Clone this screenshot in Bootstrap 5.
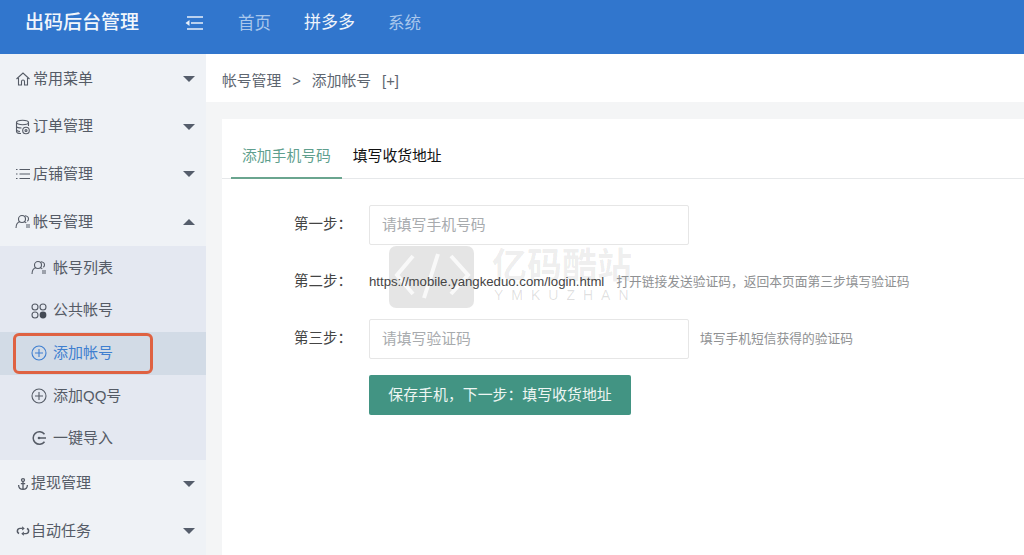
<!DOCTYPE html>
<html lang="zh">
<head>
<meta charset="utf-8">
<title>出码后台管理</title>
<link href="https://cdn.jsdelivr.net/npm/bootstrap@5.3.0/dist/css/bootstrap.min.css" rel="stylesheet">
<style>
html,body{height:100%;overflow:hidden}
body{font-family:"Liberation Sans","Noto Sans CJK SC",sans-serif;background:#f4f5f6;color:#444;font-size:14px;width:1024px;height:555px}
.topbar{height:54px;background:#3176cd;padding:0 0 8px 25px;flex-wrap:nowrap;justify-content:flex-start}
.brandname{font-size:19px;color:#f2f6fc;font-weight:500;width:159px;margin:1px 0 0;padding:0}
.menutoggle{width:20px;height:16px;margin-right:34px;display:block}
.toplink{font-size:16.500px;padding:0;margin-right:33px;color:#a9c7ec}
.toplink.now{color:#eef4fb;font-size:17px}
.layout{height:501px}
.sidenav{width:206px;background:#eff2f6;flex:none;overflow:hidden;padding-top:1px}
.sideitem{height:47.7px;padding:0 11px 0 15px;color:#555b66;font-size:15px;text-decoration:none}
.sideitem svg{width:16px;height:16px;margin-right:2px;flex:none}
.sideitem svg.slimicon{width:14px;height:14px;margin-left:1px;margin-right:1px}
.caretdown,.caretup{width:0;height:0;border-left:6.500px solid transparent;border-right:6.500px solid transparent}
.caretdown{border-top:6.500px solid #555d6b}
.caretup{border-bottom:6.500px solid #555d6b}
.subnav{background:#e4e8f1;margin:0;padding:1px 0 0;list-style:none}
.subitem{height:42.6px;padding-left:31px;color:#555b66;font-size:15px;position:relative;text-decoration:none}
.subitem svg{width:16px;height:16px;margin-right:6px;flex:none}
.subitem.now{background:#d2dbe6;color:#3f7fd0}
.callout{position:absolute;left:13px;top:1px;width:140px;height:41px;border:3px solid #df6242;border-radius:6px}
.mainpane{min-width:0;position:relative}
.crumbbar{height:48px;background:#fff;padding:7px 0 0 16px;font-size:14.800px;color:#5e6670;gap:11px}
.formcard{background:#fff;margin:17px 0 0 16px;height:440px;padding-top:18px}
.tabrow{height:42px;border-bottom:1px solid #e6e8ea;padding-left:9px;margin:0;list-style:none}
.tabbtn{display:block;height:42px;line-height:38px;padding:0 11px;font-size:14.800px;color:#111;text-decoration:none}
.tabbtn.now{color:#5f9f8e;border-bottom:2px solid #6aa58f}
.stepform{padding:26px 0 0 72px;position:relative;z-index:1}
.steprow{margin-bottom:17px;min-height:40px}
.steplabel{width:75px;font-size:14.500px;color:#444;flex:none}
.stepfield{width:320px;height:40px;border:1px solid #e6e6e6;border-radius:2px;font-size:14.800px;padding:0 12px;color:#444}
.stepfield::placeholder{color:#a8abae}
.urltext{font-size:13.200px;color:#444;margin-right:12px}
.tiptext{font-size:12.750px;color:#8f9193}
.tipgap{margin-left:11px}
.savebtn{background:#429483;color:#eef6f3;border:0;border-radius:2px;width:262px;height:40px;font-size:14.900px;padding:0;margin-left:75px;margin-top:-1px}
.watermark{position:absolute;left:183px;top:192px;display:flex;gap:18px;pointer-events:none;z-index:0}
.wmicon{width:85px;height:62px;background:rgba(0,0,0,.1);border-radius:7px;display:block}
.wmname{font-size:35px;line-height:40px;font-weight:700;color:rgba(0,0,0,.08);white-space:nowrap}
.wmlatin{font-size:14px;line-height:16px;letter-spacing:8px;color:rgba(0,0,0,.13);margin:1px 0 0 2px;white-space:nowrap}
</style>
</head>
<body>
<nav class="navbar topbar">
  <span class="navbar-brand brandname">出码后台管理</span>
  <svg class="menutoggle" viewBox="0 0 20 16" fill="none" stroke="#e8f0fa" stroke-width="1.5"><path d="M3 2h16M7 8h12M3 14h16"/><path d="M5.500 5 1.500 8l4 3z" fill="#e8f0fa" stroke="none"/></svg>
  <a class="nav-link toplink" href="#">首页</a>
  <a class="nav-link toplink now" href="#">拼多多</a>
  <a class="nav-link toplink" href="#">系统</a>
</nav>
<div class="d-flex layout">
  <aside class="sidenav">
    <a class="sideitem d-flex align-items-center" href="#">
      <svg viewBox="0 0 16 16" fill="none" stroke="#555b66" stroke-width="1.1"><path d="M1.500 8 8 2l6.500 6M3.500 7v7h3v-3.500a1.500 1.500 0 0 1 3 0V14h3V7"/></svg>
      <span class="flex-grow-1">常用菜单</span><i class="caretdown"></i></a>
    <a class="sideitem d-flex align-items-center" href="#">
      <svg viewBox="0 0 16 16" fill="none" stroke="#555b66" stroke-width="1.1"><ellipse cx="7.500" cy="3.500" rx="6" ry="2.200"/><path d="M1.500 3.500v9c0 1.200 2 2 4.500 2M1.500 7c0 1.200 2 2 5 2M1.500 10.500c0 1 1.500 1.800 3.500 2M13.500 3.500V7"/><circle cx="11" cy="11.500" r="3.300"/><circle cx="11" cy="11.500" r="1"/></svg>
      <span class="flex-grow-1">订单管理</span><i class="caretdown"></i></a>
    <a class="sideitem d-flex align-items-center" href="#">
      <svg viewBox="0 0 16 16" fill="none" stroke="#555b66" stroke-width="1.200"><path d="M4.500 3.500H15M4.500 8H15M4.500 12.500H15M1 3.500h1.500M1 8h1.500M1 12.500h1.500"/></svg>
      <span class="flex-grow-1">店铺管理</span><i class="caretdown"></i></a>
    <a class="sideitem d-flex align-items-center" href="#">
      <svg viewBox="0 0 16 16" fill="none" stroke="#555b66" stroke-width="1.100"><circle cx="7" cy="5" r="3.500"/><path d="M1 14c0-4 2.500-6 4-6.500M9 7.500c1 .3 1.700.8 2.300 1.500M10 1.800c2 .2 3.500 1.500 3.500 3.200 0 1-.5 1.800-1.200 2.300M11 11h4M11 13h4"/></svg>
      <span class="flex-grow-1">帐号管理</span><i class="caretup"></i></a>
    <ul class="subnav">
      <li><a class="subitem d-flex align-items-center" href="#">
        <svg viewBox="0 0 16 16" fill="none" stroke="#555b66" stroke-width="1.100"><circle cx="7" cy="5" r="3.500"/><path d="M1 14c0-4 2.500-6 4-6.500M9 7.500c1 .3 1.700.8 2.300 1.500M10 1.800c2 .2 3.500 1.500 3.500 3.200 0 1-.5 1.800-1.200 2.300M11 11h4M11 13h4"/></svg>帐号列表</a></li>
      <li><a class="subitem d-flex align-items-center" href="#">
        <svg viewBox="0 0 16 16" fill="none" stroke="#555b66" stroke-width="1.100"><circle cx="4" cy="4" r="3"/><circle cx="12" cy="4" r="3"/><circle cx="4" cy="12" r="3"/><circle cx="12" cy="12" r="3.400" fill="#444a55" stroke="none"/></svg>公共帐号</a></li>
      <li><a class="subitem now d-flex align-items-center" href="#">
        <svg viewBox="0 0 16 16" fill="none" stroke="#3f7fd0" stroke-width="1.100"><circle cx="8" cy="8" r="7"/><path d="M8 4v8M4 8h8"/></svg>添加帐号<span class="callout"></span></a></li>
      <li><a class="subitem d-flex align-items-center" href="#">
        <svg viewBox="0 0 16 16" fill="none" stroke="#555b66" stroke-width="1.100"><circle cx="8" cy="8" r="7"/><path d="M8 4v8M4 8h8"/></svg>添加QQ号</a></li>
      <li><a class="subitem d-flex align-items-center" href="#">
        <svg viewBox="0 0 16 16" fill="none" stroke="#555b66" stroke-width="1.500"><path d="M13.500 4.200A6.300 6.300 0 1 0 13.500 11.800M7 8h8"/><circle cx="8" cy="8" r="1.300" fill="#555b66" stroke="none"/></svg>一键导入</a></li>
    </ul>
    <a class="sideitem d-flex align-items-center" href="#">
      <svg class="slimicon" viewBox="0 0 16 16" fill="none" stroke="#555b66" stroke-width="1.500"><circle cx="8" cy="3.500" r="1.700"/><path d="M8 5.200V14M3 9c0 3 2 5 5 5s5-2 5-5M5.500 7.500h5"/></svg>
      <span class="flex-grow-1">提现管理</span><i class="caretdown"></i></a>
    <a class="sideitem d-flex align-items-center" href="#">
      <svg class="slimicon" viewBox="0 0 16 16" fill="none" stroke="#555b66" stroke-width="1.700"><path d="M7 5H4.500a3 3 0 0 0-1 5.800M9 11h2.500a3 3 0 0 0 1-5.800"/><path d="M7 2.500v5l3-2.500zM9 8.500v5L6 11z" fill="#555b66" stroke="none"/></svg>
      <span class="flex-grow-1">自动任务</span><i class="caretdown"></i></a>
  </aside>
  <main class="mainpane flex-grow-1">
    <div class="crumbbar d-flex align-items-center"><span>帐号管理</span><span>&gt;</span><span>添加帐号</span><span>[+]</span></div>
    <section class="formcard">
      <ul class="tabrow d-flex">
        <li><a class="tabbtn now" href="#">添加手机号码</a></li>
        <li><a class="tabbtn" href="#">填写收货地址</a></li>
      </ul>
      <form class="stepform">
        <div class="steprow d-flex align-items-center"><label class="steplabel">第一步：</label><input class="stepfield" placeholder="请填写手机号码"></div>
        <div class="steprow d-flex align-items-center"><label class="steplabel">第二步：</label><span class="urltext">https://mobile.yangkeduo.com/login.html</span><span class="tiptext">打开链接发送验证码，返回本页面第三步填写验证码</span></div>
        <div class="steprow d-flex align-items-center"><label class="steplabel">第三步：</label><input class="stepfield" placeholder="请填写验证码"><span class="tiptext tipgap">填写手机短信获得的验证码</span></div>
        <button type="button" class="btn savebtn">保存手机，下一步：填写收货地址</button>
      </form>
    </section>
    <div class="watermark">
      <svg class="wmicon" viewBox="0 0 85 62" fill="none" stroke="#fff" stroke-opacity=".75" stroke-width="4"><path d="M24 10 8 29l16 19M62 10l17 19-17 19M49 8 35 52"/></svg>
      <div><div class="wmname">亿码酷站</div><div class="wmlatin">YMKUZHAN</div></div>
    </div>
  </main>
</div>
<script src="https://cdn.jsdelivr.net/npm/bootstrap@5.3.0/dist/js/bootstrap.bundle.min.js"></script>
</body>
</html>
